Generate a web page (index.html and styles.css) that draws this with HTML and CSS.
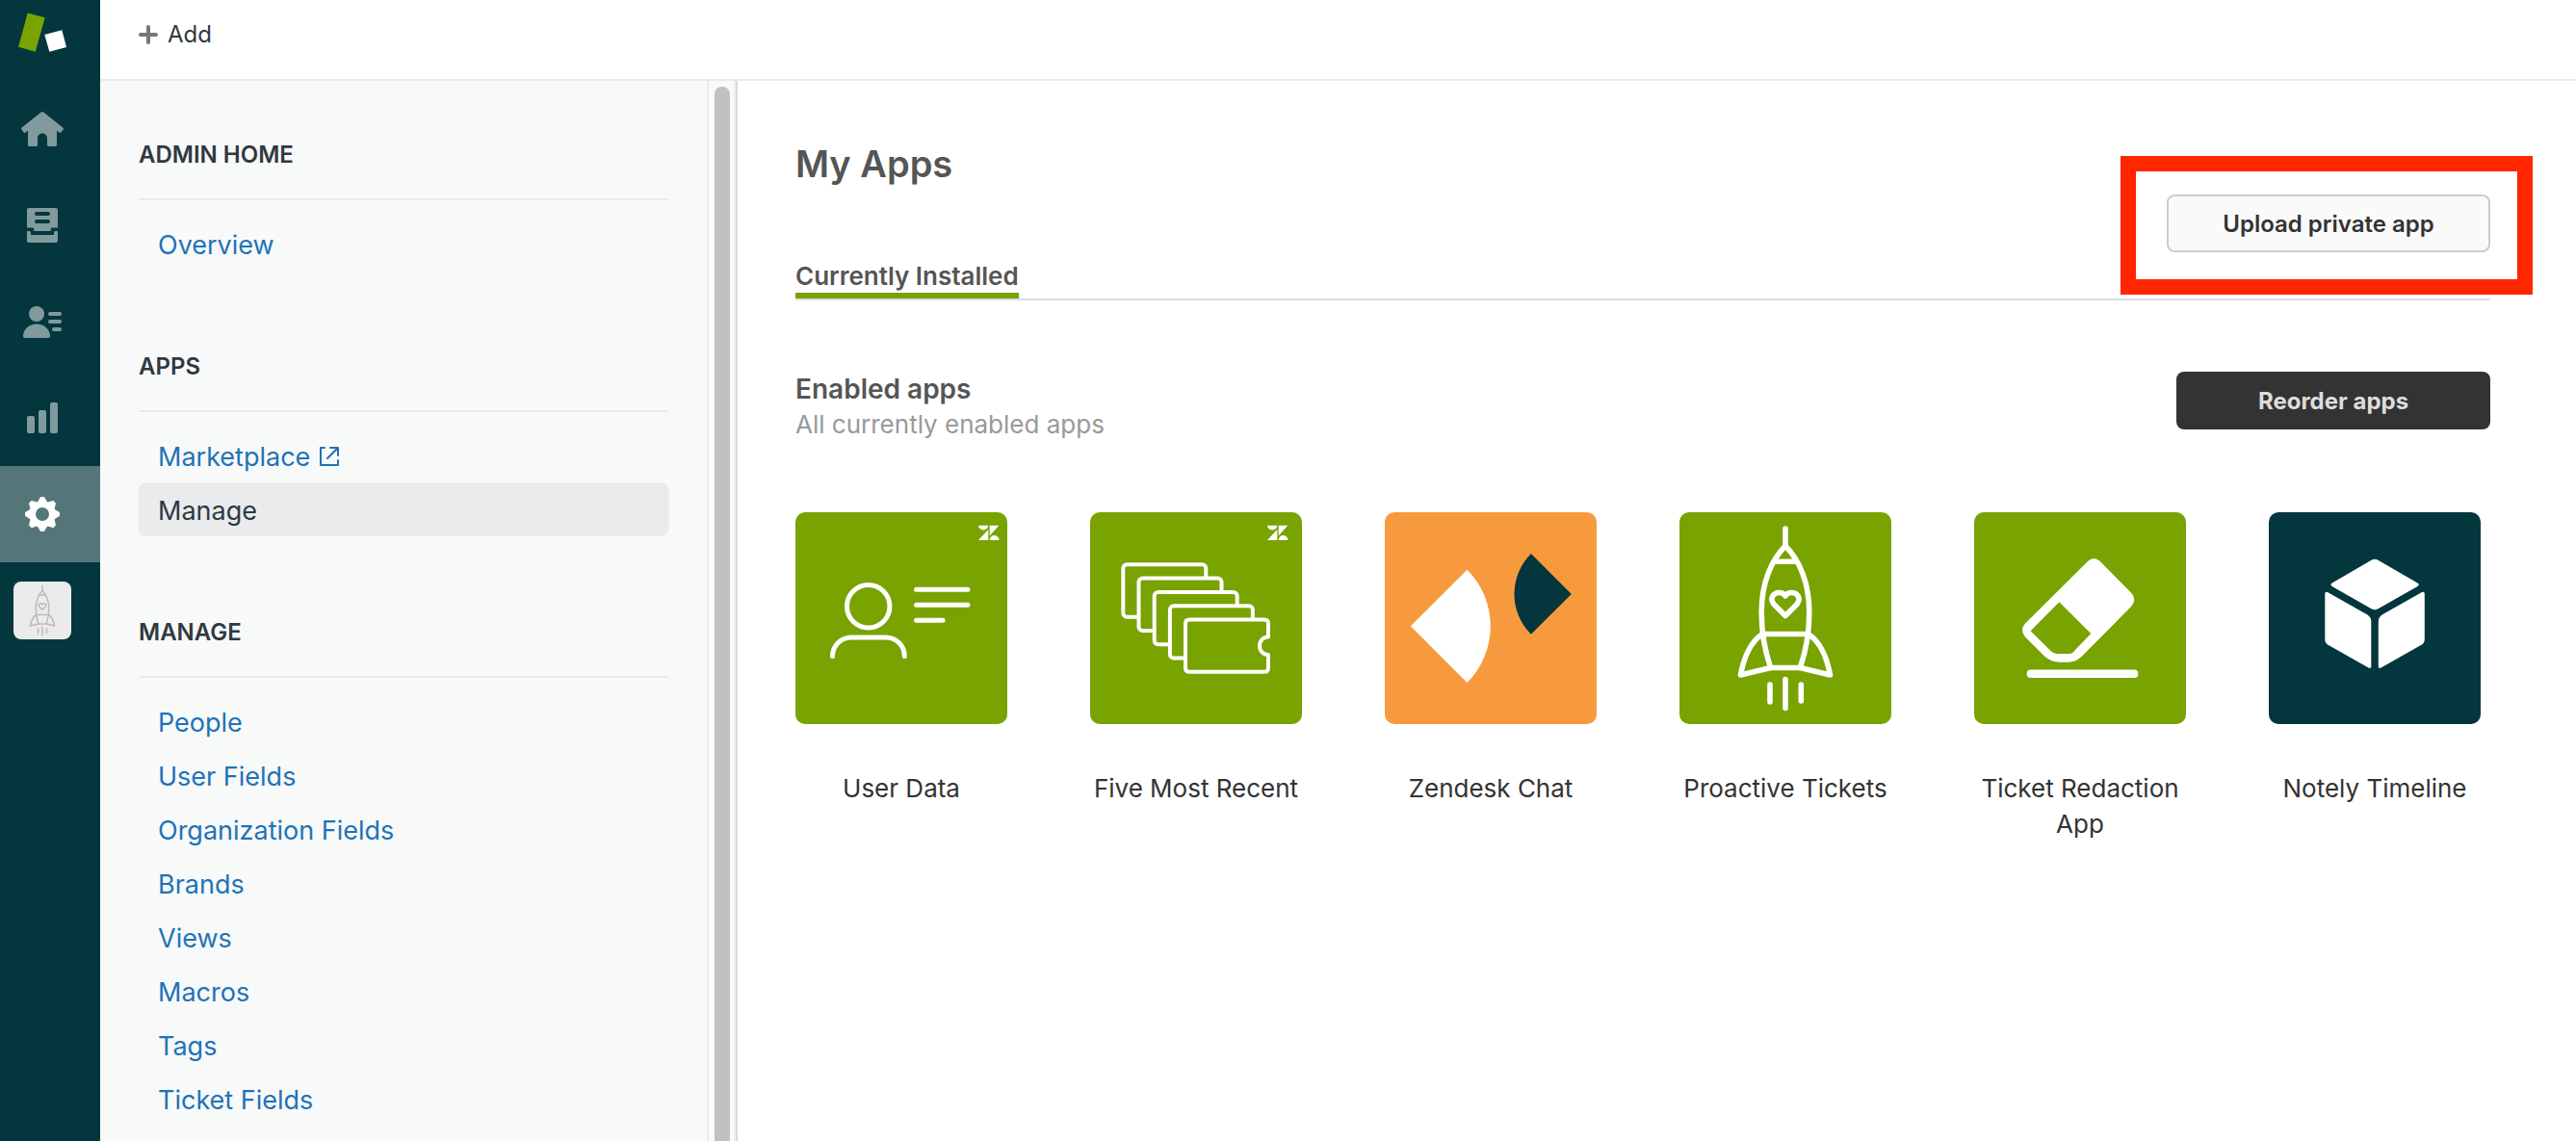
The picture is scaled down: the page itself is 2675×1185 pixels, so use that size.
FILE: index.html
```html
<!DOCTYPE html>
<html lang="en">
<head>
<meta charset="utf-8">
<title>My Apps</title>
<meta name="viewport" content="width=device-width, initial-scale=1">
<link rel="stylesheet" href="styles.css">
</head>
<body>
<svg width="0" height="0" class="defs" aria-hidden="true">
  <symbol id="rocket" viewBox="0 0 220 220">
    <g fill="none" stroke="currentColor" stroke-width="5.6" stroke-linecap="round" stroke-linejoin="round">
      <path d="M110 17v18"/>
      <path d="M110 35C95 50 85.200 74 85.200 104C85.200 126 89 145 94.700 161.500H125.300C131 145 134.800 126 134.800 104C134.800 74 125 50 110 35Z"/>
      <path d="M98.500 51.300h23M87 126.500h46"/>
      <path d="M86 126.500C75 134 67 150 63.500 169L94.700 161.500M134 126.500C145 134 153 150 156.500 169L125.300 161.500"/>
      <path d="M110 107.500L98 95.500C93 89 98 83.500 103.500 83.500C107 83.500 109 85 110 87C111 85 113 83.500 116.500 83.500C122 83.500 127 89 122 95.500Z"/>
      <path d="M94 179v18M110 173.500v30M126.300 179v17"/>
    </g>
  </symbol>
  <symbol id="zmark" viewBox="0 0 22 16">
    <path fill="#fff" d="M0 0H10.300A5.150 5 0 0 1 0 0ZM10.300 4.500V15.500H0ZM11.700 0H21.500L11.700 11ZM11.700 15.500A4.900 5 0 0 1 21.500 15.500Z"/>
  </symbol>
</svg>
<div class="app">
  <nav class="rail" aria-label="Product">
    <a class="rail-logo" href="#" aria-label="Support">
      <svg width="88" height="84" viewBox="0 0 88 84"><path fill="#78a300" d="M28.700 13.500L46.700 18.300L36.800 53.700L19 48.800Z"/><path fill="#fff" d="M46.300 36L64.300 31.300L69 49L51.300 53.700Z"/></svg>
    </a>
    <a class="rail-item" href="#" aria-label="Home">
      <svg width="44" height="36" viewBox="0 0 44 36"><path fill="currentColor" d="M20.800 .600Q22 -.400 23.200 .600L43.300 16.600Q44.300 17.500 43.600 18.600L41.600 21.300Q40.600 22.400 39.400 21.500L37 19.600V34.500Q37 36 35.500 36H28.500Q27 36 27 34.500V27.500A5 5 0 0 0 17 27.500V34.500Q17 36 15.500 36H8.500Q7 36 7 34.500V19.600L4.600 21.500Q3.400 22.400 2.400 21.300L.400 18.600Q-.300 17.500 .700 16.600Z"/></svg>
    </a>
    <a class="rail-item" href="#" aria-label="Views">
      <svg width="32" height="36" viewBox="0 0 32 36"><path fill="currentColor" fill-rule="evenodd" d="M2 0H30Q32 0 32 2V20.500H26Q24.700 20.500 24.700 22V24H7.300V22Q7.300 20.500 6 20.500H0V2Q0 0 2 0ZM10 4a2 2 0 0 0 0 4H22a2 2 0 0 0 0-4ZM10 12a2 2 0 0 0 0 4H22a2 2 0 0 0 0-4Z"/><path fill="currentColor" d="M0 24H2.500Q4 24 4 25.500V28H28V25.500Q28 24 29.500 24H32V34Q32 36 30 36H2Q0 36 0 34Z"/></svg>
    </a>
    <a class="rail-item" href="#" aria-label="Customers">
      <svg width="40" height="33" viewBox="0 0 40 33"><g fill="currentColor"><circle cx="14" cy="8" r="8"/><path d="M0 31A14 12.500 0 0 1 28 31Q28 33 26 33H2Q0 33 0 31Z"/><rect x="26" y="6" width="14" height="4" rx="2"/><rect x="26" y="14" width="14" height="4" rx="2"/><rect x="30" y="22" width="10" height="4" rx="2"/></g></svg>
    </a>
    <a class="rail-item" href="#" aria-label="Reporting">
      <svg width="32" height="32" viewBox="0 0 32 32"><g fill="currentColor"><rect y="14" width="8" height="18" rx="2"/><rect x="12" y="8" width="8" height="24" rx="2"/><rect x="24" width="8" height="32" rx="2"/></g></svg>
    </a>
    <a class="rail-item is-active" href="#" aria-label="Admin" aria-current="page">
      <svg width="36" height="36" viewBox="-18 -18 36 36">
        <path fill="currentColor" fill-rule="evenodd" d="M0-13.500A13.500 13.500 0 1 1 0 13.500A13.500 13.500 0 1 1 0-13.500ZM0-7A7 7 0 1 0 0 7A7 7 0 1 0 0-7Z"/>
        <g fill="currentColor"><path id="tooth" d="M-5.500-12L-3-16Q-2.600-18-1-18H1Q2.600-18 3-16L5.500-12Z"/><use href="#tooth" transform="rotate(45)"/><use href="#tooth" transform="rotate(90)"/><use href="#tooth" transform="rotate(135)"/><use href="#tooth" transform="rotate(180)"/><use href="#tooth" transform="rotate(225)"/><use href="#tooth" transform="rotate(270)"/><use href="#tooth" transform="rotate(315)"/></g>
      </svg>
    </a>
    <a class="rail-item" href="#" aria-label="Proactive Tickets">
      <span class="rail-app"><svg width="60" height="60"><use href="#rocket"/></svg></span>
    </a>
  </nav>

  <div class="workspace">
    <header class="topbar">
      <button class="add" type="button">
        <svg width="20" height="20" viewBox="0 0 20 20" aria-hidden="true"><path d="M10 2v16M2 10h16" stroke="#777" stroke-width="4" stroke-linecap="round"/></svg>
        Add
      </button>
    </header>

    <div class="columns">
      <aside class="sidebar">
        <section>
          <h2>ADMIN HOME</h2>
          <ul>
            <li><a href="#">Overview</a></li>
          </ul>
        </section>
        <section>
          <h2>APPS</h2>
          <ul>
            <li><a href="#">Marketplace <svg width="20" height="20" viewBox="0 0 20 20" aria-hidden="true"><path fill="none" stroke="currentColor" stroke-width="2" stroke-linecap="round" stroke-linejoin="round" d="M5 1H1V19H19V14M11 1H19V9M19 1L8 12"/></svg></a></li>
            <li><a class="is-current" href="#" aria-current="page">Manage</a></li>
          </ul>
        </section>
        <section>
          <h2>MANAGE</h2>
          <ul>
            <li><a href="#">People</a></li>
            <li><a href="#">User Fields</a></li>
            <li><a href="#">Organization Fields</a></li>
            <li><a href="#">Brands</a></li>
            <li><a href="#">Views</a></li>
            <li><a href="#">Macros</a></li>
            <li><a href="#">Tags</a></li>
            <li><a href="#">Ticket Fields</a></li>
          </ul>
        </section>
      </aside>
      <div class="track" aria-hidden="true"><div class="thumb"></div></div>

      <main class="main">
        <div class="page-head">
          <div>
            <h1>My Apps</h1>
            <nav aria-label="Apps"><a class="tab" href="#" aria-current="page">Currently Installed</a></nav>
          </div>
          <div class="callout">
            <button class="btn btn-light" type="button">Upload private app</button>
          </div>
        </div>

        <div class="section-head">
          <div>
            <h2>Enabled apps</h2>
            <p>All currently enabled apps</p>
          </div>
          <button class="btn btn-dark" type="button">Reorder apps</button>
        </div>

        <ul class="grid">
          <li><a href="#">
            <svg class="tile green" viewBox="0 0 220 220" aria-hidden="true">
              <use href="#zmark" x="190" y="13.500" width="22" height="16"/>
              <g fill="none" stroke="#fff" stroke-width="5" stroke-linecap="round"><circle cx="75.700" cy="97.700" r="22.200"/><path d="M38.500 149.500C38.500 139 47 130 58 130H94C105 130 113.300 139 113.300 149.500"/><path d="M125.500 80.300h53.500M125.500 96.300h53.500M125.500 112.300h27.500"/></g>
            </svg>
            <span>User Data</span></a></li>
          <li><a href="#">
            <svg class="tile green" viewBox="0 0 220 220" aria-hidden="true">
              <use href="#zmark" x="184" y="13.500" width="22" height="16"/>
              <g fill="#78a300" stroke="#fff" stroke-width="4" stroke-linejoin="round"><rect x="34.300" y="54.300" width="86" height="54.400" rx="4"/><rect x="50.500" y="68.600" width="86" height="54.400" rx="4"/><rect x="66.700" y="82.900" width="86" height="54.400" rx="4"/><rect x="82.900" y="97.200" width="86" height="54.400" rx="4"/><path d="M103 111.500H181Q185 111.500 185 115.500V129.500A9 9.200 0 0 0 185 148V161.700Q185 165.700 181 165.700H103Q99 165.700 99 161.700V115.500Q99 111.500 103 111.500Z"/></g>
            </svg>
            <span>Five Most Recent</span></a></li>
          <li><a href="#">
            <svg class="tile orange" viewBox="0 0 220 220" aria-hidden="true"><path fill="#fff" d="M26.800 118.300L85.500 59.700A83 83 0 0 1 85.500 177Z"/><path fill="#03363d" d="M193.800 85L151.900 43A59.200 59.200 0 0 0 151.900 126.800Z"/></svg>
            <span>Zendesk Chat</span></a></li>
          <li><a href="#">
            <svg class="tile green" viewBox="0 0 220 220" aria-hidden="true"><use href="#rocket"/></svg>
            <span>Proactive Tickets</span></a></li>
          <li><a href="#">
            <svg class="tile green" viewBox="0 0 220 220" aria-hidden="true"><path fill="#fff" fill-rule="evenodd" d="M118.500 50.500Q124.400 45.500 130.300 50.500L163 83.500Q169.500 90.700 163 98L112 149.500Q105.500 155.700 98 155.700H89Q80 155.700 73 149.500L53 129.500Q47 122 53 115.500ZM88.400 93.300L58.600 123.300L79.500 144Q82.500 147 86 147H99Q102 147 104.500 143.500L121.300 126Z"/><rect x="54.700" y="163.500" width="115.600" height="8.500" rx="4" fill="#fff"/></svg>
            <span>Ticket Redaction App</span></a></li>
          <li><a href="#">
            <svg class="tile teal" viewBox="0 0 220 220" aria-hidden="true"><path fill="#fff" d="M106.500 49.700Q110 47.800 113.500 49.700L154.500 73.500Q157 75 154.500 77L113.500 100.300Q110 102 106.500 100.300L65.700 77Q63.200 75 65.700 73.500ZM58.300 84.500Q58.500 82 61 83L102.500 106.500Q106.300 109 106.300 113.500V160.500Q106 162.800 103.500 161.500L62 138Q58.300 136 58.300 132ZM161.800 84.500Q161.600 82 159 83L117.500 106.500Q113.800 109 113.800 113.500V160.500Q114 162.800 116.500 161.500L158 138Q161.800 136 161.800 132Z"/></svg>
            <span>Notely Timeline</span></a></li>
        </ul>
      </main>
    </div>
  </div>
</div>
</body>
</html>
```
FILE: styles.css
```css
* { box-sizing: border-box; }

body {
  margin: 0;
  font-family: Inter, "Liberation Sans", sans-serif;
  color: #2f3941;
  background: #fff;
}

h1, h2, p, ul { margin: 0; padding: 0; }
ul { list-style: none; }
a { color: inherit; text-decoration: none; }
button { font: inherit; cursor: pointer; }
svg { display: block; }
.defs { position: absolute; }

.app { display: flex; height: 100vh; overflow: hidden; }

/* Product rail */
.rail { flex: none; width: 104px; background: #03363d; }
.rail-logo { display: block; height: 84px; }
.rail-item {
  display: flex;
  align-items: center;
  justify-content: center;
  height: 100px;
  padding-right: 16px;
  color: #819a9e;
}
.rail-item.is-active { color: #fff; background: #557679; }
.rail-app { border-radius: 8px; color: #bbb; background: #ebebeb; }

/* Top bar */
.workspace { flex: 1; min-width: 0; display: flex; flex-direction: column; }
.topbar {
  flex: none;
  display: flex;
  align-items: flex-start;
  height: 84px;
  padding: 20px 40px;
  border-bottom: 2px solid #e9ebed;
}
.add {
  display: flex;
  align-items: center;
  gap: 10px;
  padding: 0;
  border: 0;
  background: none;
  color: #2f3941;
  font-size: 24px;
  line-height: 32px;
}

.columns { flex: 1; min-height: 0; display: flex; }

/* Settings navigation */
.sidebar {
  flex: none;
  display: flex;
  flex-direction: column;
  gap: 85px;
  width: 632px;
  padding: 62px 40px 0;
  overflow: hidden;
  background: #f8f9f9;
  border-right: 2px solid #e9ebed;
}
.sidebar h2 {
  padding-bottom: 30px;
  border-bottom: 2px solid #e9ebed;
  font-size: 24px;
  font-weight: 600;
  line-height: 30px;
}
.sidebar ul { display: flex; flex-direction: column; gap: 2px; margin-top: 19px; }
.sidebar li a {
  display: flex;
  align-items: center;
  gap: 10px;
  height: 54px;
  padding: 0 20px;
  border-radius: 8px;
  color: #1f73b7;
  font-size: 27px;
}
.sidebar li a.is-current {
  color: #2f3941;
  background: #e9ebed;
  box-shadow: 0 -1px 2px rgba(0, 0, 0, .1);
}

.track {
  flex: none;
  width: 30px;
  padding: 6px 6px 0;
  overflow: hidden;
  background: #fafafa;
  border-right: 2px solid #d8dcde;
  box-shadow: inset -2px 0 #ededed;
}
.thumb { width: 16px; height: 100%; border-radius: 8px 8px 0 0; background: #c1c1c1; }

/* Apps page */
.main { flex: 1; min-width: 0; padding: 0 89px 0 60px; overflow: hidden; }
.page-head {
  display: flex;
  align-items: flex-start;
  justify-content: space-between;
  padding-top: 62px;
  border-bottom: 2px solid #ddd;
}
.main h1 { color: #555; font-size: 38px; font-weight: 600; line-height: 48px; }
.page-head nav { margin-top: 76px; }
.tab {
  display: inline-block;
  vertical-align: top;
  border-bottom: 6px solid #78a300;
  color: #555;
  font-size: 26px;
  font-weight: 600;
  line-height: 34px;
}

.btn { height: 60px; padding: 0; border-radius: 8px; font-size: 24px; font-weight: 600; }
.btn-light { width: 336px; border: 2px solid #ccc; color: #333; background: #fafafa; }
.btn-dark { width: 326px; border: 0; color: #ddd; background: #333; font-weight: 700; }

/* Highlight frame over the upload action */
.callout { position: relative; margin-top: 56px; }
.callout::after {
  content: "";
  position: absolute;
  inset: -40px -44px -44px -48px;
  border: 16px solid #ff2600;
  pointer-events: none;
}

.section-head {
  display: flex;
  align-items: flex-start;
  justify-content: space-between;
  padding-top: 74px;
}
.section-head h2 { color: #555; font-size: 28px; font-weight: 600; line-height: 36px; }
.section-head p { color: #999; font-size: 26px; line-height: 38px; }

.grid { display: flex; flex-wrap: wrap; gap: 86px; margin-top: 72px; }
.grid li { width: 220px; }
.grid span {
  display: block;
  margin-top: 48px;
  color: #333;
  font-size: 26px;
  line-height: 37px;
  text-align: center;
}
.tile { width: 220px; height: 220px; border-radius: 10px; color: #fff; }
.green { background: #78a300; }
.orange { background: #f79a3e; }
.teal { background: #03363d; }
```
